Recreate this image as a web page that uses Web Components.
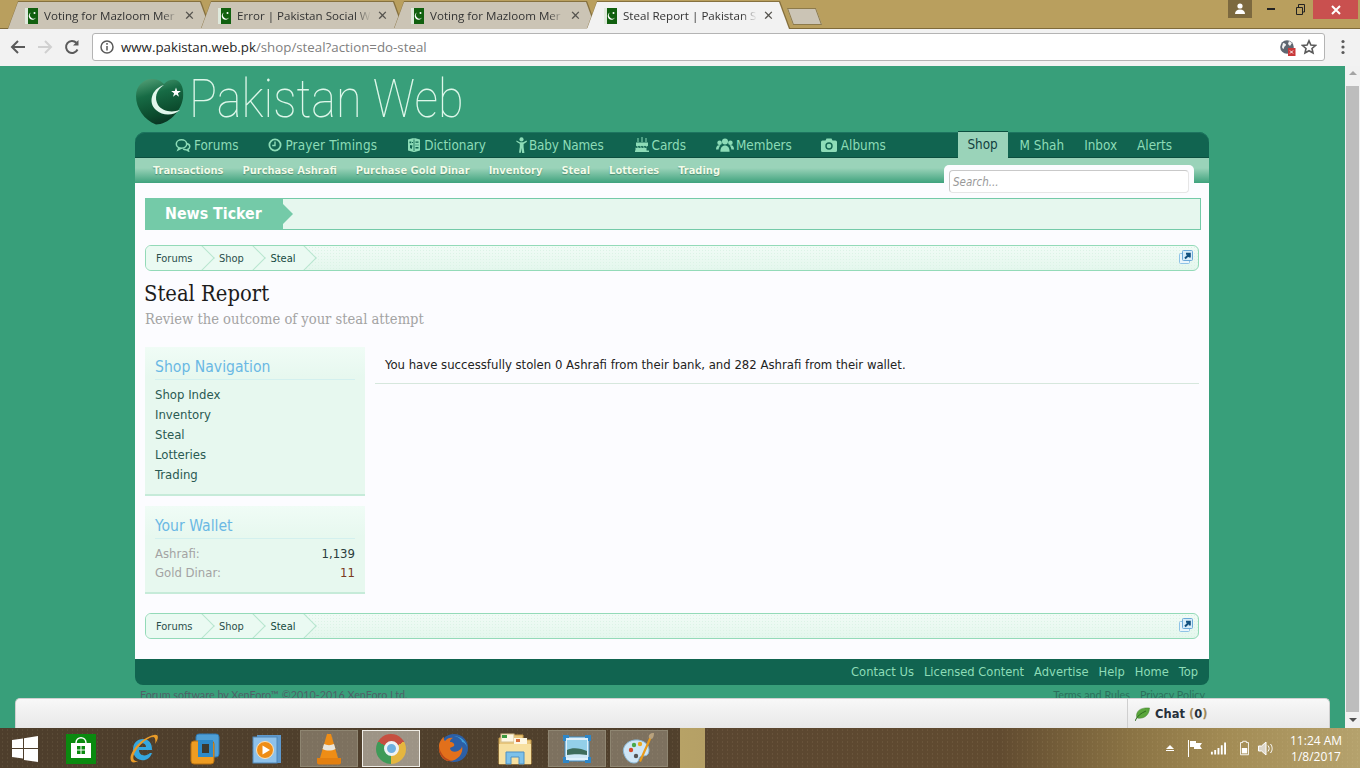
<!DOCTYPE html>
<html lang="en">
<head>
<meta charset="utf-8">
<title>Steal Report | Pakistan Social Web</title>
<style>
html, body { margin: 0; height: 100%; overflow: hidden; }
body { display: flex; flex-direction: column; height: 768px; font-family: "Open Sans", sans-serif; }
</style>
</head>
<body>
<browser-tabs></browser-tabs>
<browser-toolbar></browser-toolbar>
<web-viewport>
    <site-header></site-header>
    <site-nav></site-nav>
    <site-content>
        <news-ticker></news-ticker>
        <bread-crumbs></bread-crumbs>
        <page-title title="Steal Report" subtitle="Review the outcome of your steal attempt"></page-title>
        <shop-layout>
            <side-block slot="side" heading="Shop Navigation" kind="nav">
                <a>Shop Index</a><a>Inventory</a><a>Steal</a><a>Lotteries</a><a>Trading</a>
            </side-block>
            <side-block slot="side" heading="Your Wallet" kind="wallet">
                <wallet-row label="Ashrafi:" value="1,139"></wallet-row>
                <wallet-row label="Gold Dinar:" value="11" tone="#7a3a1e"></wallet-row>
            </side-block>
            You have successfully stolen 0 Ashrafi from their bank, and 282 Ashrafi from their wallet.
        </shop-layout>
        <bread-crumbs class="lower"></bread-crumbs>
    </site-content>
    <site-footer></site-footer>
</web-viewport>
<win-taskbar></win-taskbar>

<script>
const ICONS = {
    forums: '<svg viewBox="0 0 16 14" width="16" height="14" fill="none" stroke="currentColor" stroke-width="1.5"><ellipse cx="6.5" cy="6" rx="5.2" ry="4.2"/><path d="M4 9.5 3 12l3.5-1.8"/><path d="M11.5 5.5c2 .5 3.500 2 3.200 3.500-.2 1.300-1 2-1.700 2.300l.5 1.700-2.500-1.300c-1 0-2-.2-2.800-.8" /></svg>',
    clock: '<svg viewBox="0 0 14 14" width="14" height="14" fill="none" stroke="currentColor" stroke-width="1.8"><circle cx="7" cy="7" r="5.6"/><path d="M7 3.500V7.500H4.200" stroke-width="1.400"/></svg>',
    book: '<svg viewBox="0 0 14 16" width="14" height="16"><path fill="currentColor" d="M1 2.500 6.500 1 7 2l.5-1L13 2.500v11l-5.500 1.500h-1L1 13.500z"/><path fill="#116450" d="M2.500 4.500h1.800v1.800H2.500zM5 5h1v1H5zM6.600 2.500h.8v11.500h-.8zM3 8l2.500.6-.8 3.400L3 11zM8.500 4.500h3v1.200h-3zM8.500 7.500h1v1h-1zM10.500 7.500h1v1h-1zM8.500 10h3v1.400h-3z"/></svg>',
    baby: '<svg viewBox="0 0 11 16" width="11" height="16" fill="currentColor"><circle cx="5.500" cy="2.400" r="2.100"/><path d="M.5 3.500 3.800 5.200h3.400l3.300-1.700.5 1.200-3.400 2.300v3l.8 6H6.100L5.500 11l-.6 4.800H3l.8-6v-3L.4 4.700z"/></svg>',
    cake: '<svg viewBox="0 0 16 16" width="16" height="16" fill="currentColor"><path d="M3.500 1h1v4h-1zM7.500 0h1v5h-1zM11.500 1h1v4h-1zM2 5.500h12v3.200l-1.500 1-1.500-1-1.500 1-1.500-1-1.500 1-1.500-1-1.500 1L2 8.700zM1.500 10.500l1 .6 1.500-.9 1.500.9 1.500-.9 1.500.9 1.500-.9 1.500.9 1-.6v3H15v1.500H1v-1.500h.5z"/></svg>',
    members: '<svg viewBox="0 0 18 14" width="18" height="14" fill="currentColor"><circle cx="9" cy="3.600" r="3"/><circle cx="3.600" cy="4.800" r="2.300"/><circle cx="14.400" cy="4.800" r="2.300"/><path d="M4.400 13.800c0-4 1.800-6.200 4.600-6.200s4.600 2.200 4.600 6.200zM0 11.500c0-2.500 1-4.200 3-4.200.6 0 1 .1 1.400.3-1 1-1.600 2.200-1.800 3.900zM18 11.500c0-2.500-1-4.200-3-4.200-.6 0-1 .1-1.400.3 1 1 1.600 2.200 1.800 3.900z"/></svg>',
    camera: '<svg viewBox="0 0 16 14" width="16" height="14"><path fill="currentColor" d="M1.500 2.500h3L5.500.5h5l1 2h3A1.500 1.500 0 0 1 16 4v8.500a1.500 1.500 0 0 1-1.500 1.500h-13A1.500 1.500 0 0 1 0 12.500V4a1.500 1.500 0 0 1 1.500-1.500z"/><circle cx="8" cy="8" r="3.700" fill="#116450"/><circle cx="8" cy="8" r="2.300" fill="currentColor"/></svg>'
};

function define(name, html) {
    const template = document.createElement('template');
    template.innerHTML = html;
    customElements.define(name, class extends HTMLElement {
        constructor() {
            super();
            this._shadowRoot = this.attachShadow({ mode: 'open' });
            this._shadowRoot.appendChild(template.content.cloneNode(true));
        }
    });
}

/* ---------- browser chrome ---------- */

const flagSvg = '<svg viewBox="0 0 13 16" width="13" height="16"><rect width="13" height="16" fill="#11600f"/><rect width="3" height="16" fill="#dfe9dc"/><path d="M6 4.500a3.800 3.800 0 1 0 5 5 3.200 3.200 0 0 1-5-5z" fill="#fff"/><circle cx="9.500" cy="5" r="1" fill="#fff"/></svg>';

class BrowserTab extends HTMLElement {
    constructor() {
        super();
        this._shadowRoot = this.attachShadow({ mode: 'open' });
    }
    connectedCallback() {
        const on = this.hasAttribute('active');
        this._shadowRoot.innerHTML = `
        <style>
        :host { display: block; width: 202px; height: 27px; margin: 2px -9px 0 0; position: relative; z-index: ${on ? 2 : 1}; filter: drop-shadow(0 -1px 0 #86713f) drop-shadow(1px 0 0 #86713f); }
        .shape { height: 100%; display: flex; align-items: center; box-sizing: border-box; padding-left: 17px;
            background: ${on ? '#f2f2f2' : '#cbc4b5'}; clip-path: polygon(0 100%, 10px 0, calc(100% - 10px) 0, 100% 100%); }
        svg { flex: none; }
        .label { width: 134px; margin-left: 6px; white-space: nowrap; overflow: hidden; font: 11.6px "Open Sans", sans-serif; color: #333;
            -webkit-mask-image: linear-gradient(90deg, #000 88%, transparent); mask-image: linear-gradient(90deg, #000 88%, transparent); }
        .close { margin-left: 6px; font: bold 13px "DejaVu Sans", sans-serif; color: #55534e; }
        </style>
        <div class="shape">${flagSvg}<span class="label">${this.getAttribute('label')}</span><span class="close">✕</span></div>`;
    }
}
customElements.define('browser-tab', BrowserTab);

define('browser-tabs', `
    <style>
    :host { display: flex; flex: none; height: 29px; box-sizing: border-box; padding-left: 8px; background: linear-gradient(#b99f5e 28px, #7f6a39 28px); align-items: flex-start; }
    .new { width: 27px; height: 15px; margin: 8px 0 0 10px; background: #cbc4b5; border: 1px solid #8d7a4a; transform: skewX(20deg); }
    .win { margin-left: auto; display: flex; align-items: flex-start; padding-right: 2px; }
    .user { width: 24px; height: 18px; background: #7c693f; display: flex; align-items: center; justify-content: center; margin-right: 5px; }
    .ctl { width: 29px; height: 19px; display: flex; align-items: center; justify-content: center; }
    .closebtn { width: 45px; height: 19px; background: #c9504f; display: flex; align-items: center; justify-content: center; margin-left: -2px; }
    </style>
    <browser-tab label="Voting for Mazloom Mer"></browser-tab>
    <browser-tab label="Error | Pakistan Social We"></browser-tab>
    <browser-tab label="Voting for Mazloom Mer"></browser-tab>
    <browser-tab active label="Steal Report | Pakistan So"></browser-tab>
    <div class="new"></div>
    <div class="win">
        <div class="user"><svg width="12" height="12" viewBox="0 0 12 12" fill="#fff"><circle cx="6" cy="3" r="2.600"/><path d="M1 11c0-3 2-4.500 5-4.500s5 1.500 5 4.500z"/></svg></div>
        <div class="ctl"><svg width="9" height="3"><rect width="8" height="2" fill="#222"/></svg></div>
        <div class="ctl"><svg width="9" height="11" fill="none" stroke="#222"><path d="M.5 3.500h6v7h-6zM2.500 3V.5h6V8H7"/></svg></div>
        <div class="closebtn"><svg width="10" height="10" stroke="#fff" stroke-width="2"><path d="M1 1l8 8M9 1 1 9"/></svg></div>
    </div>
`);

define('browser-toolbar', `
    <style>
    :host { display: flex; flex: none; height: 37px; box-sizing: border-box; padding: 4px 0 5px 10px; align-items: center; background: #f2f2f2; }
    .nav { width: 16px; height: 16px; margin-right: 11px; flex: none; }
    .bar { flex: none; width: 1233px; height: 28px; margin-left: 1px; box-sizing: border-box; border: 1px solid #b4b4b4; border-radius: 3px; background: #fff; display: flex; align-items: center; padding: 0 7px 0 7px; }
    .url { margin-left: 7px; font: 13.3px "Open Sans", sans-serif; color: #808080; white-space: nowrap; }
    .url b { font-weight: 400; color: #262626; }
    .right { margin-left: auto; display: flex; align-items: center; gap: 5px; }
    .menu { margin-left: 16px; }
    </style>
    <svg class="nav" viewBox="0 0 16 16" fill="none" stroke="#5a5a5a" stroke-width="2"><path d="M15 8H2M8 2 2 8l6 6"/></svg>
    <svg class="nav" viewBox="0 0 16 16" fill="none" stroke="#d0d0d0" stroke-width="2"><path d="M1 8h13M8 2l6 6-6 6"/></svg>
    <svg class="nav" viewBox="0 0 16 16" fill="none" stroke="#5a5a5a" stroke-width="2"><path d="M13.500 10.500A6 6 0 1 1 12.400 3.800"/><path d="M14.500 1v5.500H9z" fill="#5a5a5a" stroke="none"/></svg>
    <div class="bar">
        <svg width="14" height="14" viewBox="0 0 14 14" fill="none" stroke="#5a5a5a" stroke-width="1.500"><circle cx="7" cy="7" r="6"/><path d="M7 6v4.500M7 3v1.800"/></svg>
        <span class="url"><b>www.pakistan.web.pk</b>/shop/steal?action=do-steal</span>
        <div class="right">
            <svg width="16" height="17" viewBox="0 0 16 17"><circle cx="7" cy="8" r="6.800" fill="#5e6670"/><path d="M3 4c2 0 3 1 3 2s-2 1-2 3-2 0-2-1zM9 2l3 2-2 3-2-2zM10 10l3 1-2 3z" fill="#f2f2f2"/><rect x="8" y="9" width="7.500" height="8" fill="#c9393a"/><path d="M10 11.500l3 3M13 11.500l-3 3" stroke="#fff"/></svg>
            <svg width="16" height="16" viewBox="0 0 16 16" fill="none" stroke="#5a5a5a" stroke-width="1.600"><path d="M8 1.800l1.900 4.200 4.500.5-3.400 3 1 4.500L8 11.700 4 14l1-4.500-3.400-3 4.500-.5z"/></svg>
        </div>
    </div>
    <svg class="menu" style="margin-left:16px" width="4" height="16" viewBox="0 0 4 16" fill="#5a5a5a"><circle cx="2" cy="2.500" r="1.600"/><circle cx="2" cy="8" r="1.600"/><circle cx="2" cy="13.500" r="1.600"/></svg>
`);

/* ---------- site ---------- */

define('web-viewport', `
    <style>
    :host { display: flex; flex: 1; min-height: 0; position: relative; overflow: hidden; background: #389f7a; }
    .page { flex: 1; min-width: 0; padding-left: 135px; overflow: hidden; }
    .sheet { width: 1074px; }
    .scroll { flex: none; width: 15px; box-sizing: border-box; background: #f1f1f1; display: flex; flex-direction: column; align-items: center; padding: 5px 1px 0; }
    .thumb { width: 100%; height: 626px; margin: 11px 0 6px; background: #bdbdbd; }
    .up, .down { width: 0; height: 0; border-left: 4px solid transparent; border-right: 4px solid transparent; }
    .up { border-bottom: 4px solid #a4a4a4; }
    .down { border-top: 4px solid #505050; }
    .legal { display: flex; justify-content: space-between; padding: 3px 4px 0 5px; font: 10.8px Lato, sans-serif; color: #2b6f5c; }
    .legal .soft { color: #4f6068; }
    .legal span + span { margin-left: 10px; }
    </style>
    <div class="page"><div class="sheet">
        <slot></slot>
        <div class="legal"><div class="soft">Forum software by XenForo™ ©2010-2016 XenForo Ltd.</div><div><span>Terms and Rules</span><span>Privacy Policy</span></div></div>
    </div></div>
    <div class="scroll"><div class="up"></div><div class="thumb"></div><div class="down"></div></div>
    <chat-bar></chat-bar>
`);

define('site-header', `
    <style>
    :host { display: flex; align-items: center; height: 66px; }
    svg { flex: none; margin: 5px 0 0 1px; }
    .name { margin-left: 5px; font: 100 53px/60px Roboto, "Open Sans", sans-serif; color: #def7ea; white-space: nowrap; transform: scaleX(.882); transform-origin: left center; }
    </style>
    <svg width="48" height="47" viewBox="0 0 48 47">
        <defs><linearGradient id="h" x1=".2" y1="0" x2=".5" y2="1"><stop offset="0" stop-color="#4f9d74"/><stop offset=".35" stop-color="#176b45"/><stop offset=".8" stop-color="#0b4a2c"/><stop offset="1" stop-color="#0a3322"/></linearGradient></defs>
        <path d="M20 46.500C8 42 0 30 0 18 0 6 10 0 17 1c5 0 9 3 11 5 3-4 8-5 12-4 6 2 8 10 7 18-2 14-15 26.500-27 26.500z" fill="url(#h)"/>
        <path d="M28 7C15 11 12 25 20 32c7 6 17 6 24 0-9 3-18 1-22-5-4-7-2-15 6-20z" fill="#e2f7ec"/>
        <path d="M40 9.500l1.200 3.500h3.700l-3 2.200 1.100 3.500-3-2.200-3 2.200 1.100-3.500-3-2.200h3.700z" fill="#fff"/>
    </svg>
    <div class="name">Pakistan Web</div>
`);

class NavLink extends HTMLElement {
    constructor() {
        super();
        this._shadowRoot = this.attachShadow({ mode: 'open' });
    }
    connectedCallback() {
        const icon = ICONS[this.getAttribute('icon')] || '';
        this._shadowRoot.innerHTML = `
        <style>
        :host { display: flex; align-items: center; gap: 3px; height: 26px; font: 13.4px "DejaVu Sans Condensed", "DejaVu Sans", sans-serif; color: #8ddcb7; white-space: nowrap; }
        svg { display: block; flex: none; }
        </style>${icon}<slot></slot>`;
    }
}
customElements.define('nav-link', NavLink);

define('site-nav', `
    <style>
    :host { display: block; position: relative; }
    .top { height: 26px; display: flex; background: #116450; border-radius: 10px 10px 0 0; box-sizing: border-box; padding-left: 40px; box-shadow: inset 0 -1px 0 #0c4f3f, inset 0 1px 0 #1d7560; }
    .main { display: flex; gap: 30px; }
    .right { margin-left: auto; display: flex; padding-right: 37px; }
    .right nav-link { margin-right: 20px; }
    .right nav-link:last-child { margin-right: 0; }
    .shop { width: 50px; height: 27px; margin: -1px 11px 0 0; background: #9ad3b9; color: #123f3f; display: flex; align-items: center; justify-content: center; font: 13.4px "DejaVu Sans Condensed", sans-serif; box-shadow: inset 0 1px 0 #0c4f3f; }
    .sub { height: 25px; display: flex; gap: 19px; padding-left: 18px; background: linear-gradient(#9ad3b9 0, #9ad3b9 40%, #3fa27d 100%); align-items: center; padding-bottom: 1px; box-sizing: border-box; font: bold 11px "DejaVu Sans Condensed", sans-serif; color: #f2fbe9; text-shadow: 0 1px 1px #4d8d72; }
    .searchtab { position: absolute; left: 809px; top: 33px; width: 250px; height: 28px; box-sizing: border-box; padding: 5px; background: #fcfcff; border-radius: 5px 5px 0 0; }
    .input { height: 23px; box-sizing: border-box; border: 1px solid #c9c9c9; border-bottom-color: #e6e6e6; border-right-color: #e6e6e6; border-radius: 4px; background: #fff; padding: 0 3px; font: italic 11.500px/22px "DejaVu Sans Condensed", sans-serif; color: #999; }
    </style>
    <div class="top">
        <div class="main">
            <nav-link icon="forums">Forums</nav-link>
            <nav-link icon="clock" style="letter-spacing:.15px">Prayer Timings</nav-link>
            <nav-link icon="book">Dictionary</nav-link>
            <nav-link icon="baby" style="gap:2px;letter-spacing:-.15px">Baby Names</nav-link>
            <nav-link icon="cake" style="gap:2px">Cards</nav-link>
            <nav-link icon="members" style="gap:2px">Members</nav-link>
            <nav-link icon="camera" style="margin-left:-1px;gap:4px">Albums</nav-link>
        </div>
        <div class="right">
            <div class="shop">Shop</div>
            <nav-link style="margin-left:1px">M Shah</nav-link>
            <nav-link>Inbox</nav-link>
            <nav-link>Alerts</nav-link>
        </div>
    </div>
    <div class="sub"><span>Transactions</span><span>Purchase Ashrafi</span><span>Purchase Gold Dinar</span><span>Inventory</span><span>Steal</span><span>Lotteries</span><span>Trading</span></div>
    <div class="searchtab"><div class="input">Search...</div></div>
`);

define('site-content', `
    <style>
    :host { display: block; height: 476px; box-sizing: border-box; padding: 15px 10px 0 10px; background: #fcfcff; }
    </style>
    <slot></slot>
`);

define('news-ticker', `
    <style>
    :host { display: flex; height: 32px; width: 1056px; box-sizing: border-box; border: 1px solid #74caa8; background: #e6f7ee; }
    .label { position: relative; width: 137px; margin: -1px 0; box-sizing: border-box; padding-left: 19px; background: #74caa8; color: #fff; font: bold 15.8px/32px "DejaVu Sans Condensed", sans-serif; }
    .label::after { content: ""; position: absolute; left: 100%; top: 6px; border-left: 10px solid #74caa8; border-top: 10px solid transparent; border-bottom: 10px solid transparent; }
    </style>
    <div class="label">News Ticker</div>
`);

define('bread-crumbs', `
    <style>
    :host { display: flex; align-items: center; height: 26px; margin-top: 15px; box-sizing: border-box; border: 1px solid #93dab8; border-radius: 6px; overflow: hidden; position: relative; padding-left: 10px;
        background: radial-gradient(circle, #dcf3e6 .6px, transparent .8px) 0 0/3px 3px, linear-gradient(#f1fbf6, #e4f7ed);
        font: 11px "DejaVu Sans Condensed", sans-serif; color: #2b4f4c; }
    .fill { position: absolute; left: 0; top: 0; bottom: 0; width: 160px; background: #eafaf2; }
    span { position: relative; z-index: 0; padding-right: 9px; margin-right: 17.5px; height: 100%; display: flex; align-items: center; }
    span::after { content: ""; position: absolute; z-index: -1; right: -9px; top: 3px; width: 17px; height: 17px; transform: rotate(45deg); border: solid #b7e6cf; border-width: 1px 1px 0 0; background: #eafaf2; }
    b { font-weight: 400; color: #164a3f; }
    svg { position: absolute; right: 5px; top: 4px; }
    </style>
    <div class="fill"></div>
    <span>Forums</span><span>Shop</span><span><b>Steal</b></span>
    <svg width="14" height="14" viewBox="0 0 14 14"><rect x=".5" y="3.500" width="10" height="10" rx="1" fill="#e9f5fb" stroke="#8fc3e6"/><rect x="3.500" y=".5" width="10" height="10" rx="1" fill="#d7ecf9" stroke="#6ca9d8"/><path d="M6 8.500 10 4.500M7 3.800h3.800v3.800" fill="none" stroke="#12507e" stroke-width="2"/></svg>
`);

class PageTitle extends HTMLElement {
    constructor() {
        super();
        this._shadowRoot = this.attachShadow({ mode: 'open' });
    }
    connectedCallback() {
        this._shadowRoot.innerHTML = `
        <style>
        :host { display: block; margin-top: 8px; height: 68px; }
        h1 { margin: 0 0 0 -1px; font: 400 21.8px/30px "DejaVu Serif Condensed", "DejaVu Serif", serif; color: #1c1c1c; }
        p { margin: 0; font: 14.6px/20px "DejaVu Serif Condensed", "DejaVu Serif", serif; color: #a3a3a3; }
        </style>
        <h1>${this.getAttribute('title')}</h1><p>${this.getAttribute('subtitle')}</p>`;
    }
}
customElements.define('page-title', PageTitle);

define('shop-layout', `
    <style>
    :host { display: flex; height: 251px; font: 13px "DejaVu Sans Condensed", sans-serif; color: #222; }
    .side { flex: none; width: 220px; display: flex; flex-direction: column; gap: 10px; }
    .main { flex: 1; margin-left: 10px; height: 37px; box-sizing: border-box; padding: 9px 10px 0; border-bottom: 1px solid #d6e7dd; line-height: 18px; white-space: nowrap; }
    </style>
    <div class="side"><slot name="side"></slot></div>
    <div class="main"><slot></slot></div>
`);

class SideBlock extends HTMLElement {
    constructor() {
        super();
        this._shadowRoot = this.attachShadow({ mode: 'open' });
    }
    connectedCallback() {
        const nav = this.getAttribute('kind') === 'nav';
        this._shadowRoot.innerHTML = `
        <style>
        :host { display: block; box-sizing: border-box; height: ${nav ? 149 : 88}px; padding: 10px 10px 0; border-bottom: 2px solid #c6ebd9; background: linear-gradient(#f0fcf6, #e7f8ef 30px); font: 13px "DejaVu Sans Condensed", sans-serif; }
        h3 { margin: 0; height: 22px; font: 400 15.6px/20px "DejaVu Sans Condensed", sans-serif; color: #6ab8e4; border-bottom: 1px solid #d3f0ee; }
        .list { display: flex; flex-direction: column; padding-top: 5px; }
        ::slotted(a) { display: block; line-height: 20px; color: #2a5a52; }
        </style>
        <h3>${this.getAttribute('heading')}</h3>
        <div class="list"><slot></slot></div>`;
    }
}
customElements.define('side-block', SideBlock);

class WalletRow extends HTMLElement {
    constructor() {
        super();
        this._shadowRoot = this.attachShadow({ mode: 'open' });
    }
    connectedCallback() {
        this._shadowRoot.innerHTML = `
        <style>
        :host { display: flex; justify-content: space-between; line-height: 19px; color: #a3a3a3; }
        b { font-weight: 400; color: ${this.getAttribute('tone') || '#2b3d3d'}; }
        </style>
        <span>${this.getAttribute('label')}</span><b>${this.getAttribute('value')}</b>`;
    }
}
customElements.define('wallet-row', WalletRow);

define('site-footer', `
    <style>
    :host { display: flex; justify-content: flex-end; gap: 10px; height: 26px; box-sizing: border-box; padding: 0 11px 0 0; background: #116450; border-radius: 0 0 8px 8px; font: 12.8px/25px "DejaVu Sans Condensed", sans-serif; color: #8ddcb7; }
    </style>
    <span>Contact Us</span><span>Licensed Content</span><span>Advertise</span><span>Help</span><span>Home</span><span>Top</span>
`);

define('chat-bar', `
    <style>
    :host { position: absolute; left: 15px; bottom: 0; width: 1315px; height: 30px; box-sizing: border-box; border: solid #d0d0d0; border-width: 1px 1px 0; border-radius: 5px 5px 0 0; background: linear-gradient(#f8f8f8, #e8e8e8); display: flex; justify-content: flex-end; }
    .chat { width: 202px; border-left: 1px solid #cfcfcf; display: flex; align-items: center; padding-left: 7px; box-sizing: border-box; gap: 5px; font: bold 11.500px "DejaVu Sans", sans-serif; color: #262f3a; }
    i { font-style: normal; color: #a08a5e; }
    </style>
    <div class="chat">
        <svg width="15" height="14" viewBox="0 0 15 14"><path d="M14.500 1C8 .5 2 2 1.500 8.500c0 1 .3 2 .8 2.500C7 12 14 10 14.500 1z" fill="#5aa63c" stroke="#3e7d2a" stroke-width=".5"/><path d="M0 14c2-5 6-8 11-10" fill="none" stroke="#2f6a20"/></svg>
        <span>Chat <i>(</i>0<i>)</i></span>
    </div>
`);

/* ---------- windows taskbar ---------- */

define('win-taskbar', `
    <style>
    :host { display: flex; flex: none; height: 40px; align-items: center; gap: 4px; position: relative;
        background:
            linear-gradient(90deg, transparent 680px, #b7a266 680px, #b5a066 705px, transparent 705px),
            radial-gradient(circle, rgba(255,235,190,.07) .7px, transparent 1px) 0 0/5px 4px,
            linear-gradient(90deg, #4e3e2c 0, #50402c 670px, #5a4630 720px, #614b30 1000px, #8a7344 1130px, #a38c55 1230px, #b5a26d 1360px); }
    .slot { flex: none; width: 58px; height: 37px; margin-top: 1px; display: flex; align-items: center; justify-content: center; box-sizing: border-box; }
    .start { width: 50px; margin-right: -2px; }
    .open { border: 1px solid #8f8672; background: rgba(200,195,180,.38); }
    .hot { border: 1.500px solid #efece5; background: rgba(210,205,195,.6); }
    .chrome { width: 30px; height: 30px; border-radius: 50%; background: conic-gradient(#c64f40 0 60deg, #e5b63f 60deg 180deg, #3f9a58 180deg 300deg, #c64f40 300deg); display: flex; align-items: center; justify-content: center; }
    .chrome::after { content: ""; width: 9px; height: 9px; border: 3px solid #eef2f4; border-radius: 50%; background: #6fb0df; }
    .tray { position: absolute; left: 1165px; top: 0; height: 40px; display: flex; align-items: center; color: #fff; }
    .clock { position: absolute; left: 125px; top: 5px; width: 52px; text-align: center; font: 12px/16px "Open Sans", sans-serif; color: #fff; white-space: nowrap; }
    </style>
    <div class="slot start"><svg width="26" height="26" viewBox="0 0 26 26" fill="#fff"><path d="M0 4l11-1.500V12H0zM12 2.300 26 0v12H12zM0 13h11v9.500L0 21zM12 13h14v13l-14-2z"/></svg></div>
    <div class="slot"><svg width="30" height="30" viewBox="0 0 30 30"><rect width="30" height="30" fill="#0a8a0f"/><path d="M5 9h20v15H5z" fill="#fff"/><path d="M10 9c0-7 10-7 10 0" fill="none" stroke="#fff" stroke-width="1.500"/><path d="M11 12h3.500v3.500H11zM15.500 12H19v3.500h-3.500zM11 16.500h3.500V20H11zM15.500 16.500H19V20h-3.500z" fill="#0a8a0f"/></svg></div>
    <div class="slot"><svg width="32" height="32" viewBox="0 0 32 32"><path d="M6 17c0-7 4-11 10-11s9 4 9 11H12c0 6 7 7 11 3h2c-2 6-7 8-11 7-5-1-8-5-8-10zm6-3h7c0-5-7-5-7 0z" fill="#35a7df"/><path d="M5 29C-1 24 12 5 27 2c5-1 5 3 1 9 1-4 0-7-2-7C17 5 3 22 7 27c1 1 2 1 4 1-2 1-4 2-6 1z" fill="#e99b28"/></svg></div>
    <div class="slot"><svg width="30" height="32" viewBox="0 0 30 32"><rect x="6" y="1" width="23" height="23" rx="3" fill="#4f9fd6" stroke="#2e79b3"/><rect x="1" y="8" width="23" height="23" rx="3" fill="#ee9c22" stroke="#b56f10"/><rect x="8" y="7" width="15" height="17" fill="#2d8ac8"/><rect x="12" y="11" width="7" height="9" fill="#3d3a2f"/></svg></div>
    <div class="slot"><svg width="30" height="32" viewBox="0 0 30 32"><rect x="5" y="2" width="24" height="28" fill="#5f99cd"/><rect x="1" y="4" width="24" height="26" fill="#8ec1ea" stroke="#4f86b8"/><circle cx="13" cy="17" r="8.500" fill="#ee8d16" stroke="#fbe3bd"/><path d="M10.500 12.500 18 17l-7.500 4.500z" fill="#fff"/></svg></div>
    <div class="slot open"><svg width="26" height="32" viewBox="0 0 26 32"><path d="M11 1h4l7 24H4z" fill="#ee8d16"/><path d="M8 11c3 1.500 7 1.500 10 0l1.500 5c-4 2-9 2-13 0zM5 22l1-3" fill="#e9e6dd"/><path d="M1 25h24v4.500a2 2 0 0 1-2 2H3a2 2 0 0 1-2-2z" fill="#e27f10"/></svg></div>
    <div class="slot hot"><div class="chrome"></div></div>
    <div class="slot"><svg width="32" height="32" viewBox="0 0 32 32"><circle cx="17" cy="15" r="14" fill="#2c5fa6"/><path d="M17 3c6 0 13 5 13 12 0-3-3-6-5-6 0-2-3-5-8-6z" fill="#3fa1dc"/><path d="M2 13c0-4 3-8 5-9-.5 2 0 3 1 4 2-3 6-4 8-3-2 1-3 2-3 4 3 0 5 2 4 4-1 1-3 1-4 2 0 3 4 5 8 3 2-1 4-3 4-5 2 7-4 15-13 15C6 28 1 21 2 13z" fill="#e2701b"/><path d="M2 13C3 21 9 27 16 28c-7 2-15-5-14-15z" fill="#b9481b"/></svg></div>
    <div class="slot"><svg width="36" height="34" viewBox="0 0 36 34"><path d="M2 6h6l2-3h16v5h8v24H2z" fill="#e8c67a" stroke="#c59a48"/><rect x="4" y="2" width="13" height="8" fill="#fdf7e3" stroke="#d5bf8c"/><rect x="5" y="3" width="5" height="3" fill="#3c9a3f"/><rect x="17" y="6" width="13" height="6" fill="#fdf7e3"/><rect x="19" y="7" width="4" height="3" fill="#d9703c"/><rect x="2" y="12" width="32" height="20" fill="#f7e0a0"/><path d="M9 32V20h18v12h-5v-7h-8v7z" fill="#7cc1ea" stroke="#4d90c4"/></svg></div>
    <div class="slot open"><svg width="30" height="30" viewBox="0 0 30 30"><rect x="3" y="3" width="24" height="24" fill="#dff1fb" stroke="#3f8fc8"/><rect x="5" y="6" width="20" height="18" fill="#93cfe9"/><path d="M5 16c5-3 14-2 20 1v7H5z" fill="#3e6d5c"/><path d="M5 21c6-1 14-1 20 0v3H5z" fill="#cde7f5"/><path d="M1 1h6v3H4v3H1zM29 1v6h-3V4h-3V1zM1 29v-6h3v3h3v3zM29 29h-6v-3h3v-3h3z" fill="#2f86c6"/></svg></div>
    <div class="slot open"><svg width="34" height="34" viewBox="0 0 34 34"><path d="M2 22C-1 14 7 7 16 8c9 1 13 8 10 14-2 3-6 1-8 3-2 3-1 6-6 6-4 0-8-3-10-9z" fill="#cfe6f6" stroke="#8bbad9"/><circle cx="9" cy="18" r="2.200" fill="#d5492a"/><circle cx="12" cy="13" r="2.200" fill="#4aa84a"/><circle cx="18" cy="12" r="2.200" fill="#e9a924"/><circle cx="14" cy="24" r="2.200" fill="#555"/><path d="M30 5 19 30l-2-1L28 4z" fill="#e89a1b"/><path d="M27 6c-1-3 1-5 5-5 0 3-1 6-3 6z" fill="#b8a27e"/></svg></div>
    <div class="tray">
        <svg width="10" height="6" viewBox="0 0 10 6" fill="#fff"><path d="M5 0l4 4H1zM1 5h8v1H1z"/></svg>
        <svg style="margin-left:12px" width="15" height="17" viewBox="0 0 15 17" fill="#fff"><path d="M1 0h1v17H1zM3 1h6v2h6l-2 3 2 3H7V7H3z"/></svg>
        <svg style="margin-left:8px" width="16" height="13" viewBox="0 0 17 13" fill="#fff"><path d="M1 10h2v3H1zM4.500 8h2v5h-2zM8 6h2v7H8zM11.500 3h2v10h-2zM15 0h2v13h-2z"/></svg>
        <svg style="margin-left:14px" width="9" height="16" viewBox="0 0 10 16"><path d="M3 .5h4v1.500h2.500v13.500H.5V2H3z" fill="none" stroke="#fff"/><rect x="2" y="8" width="6" height="6" fill="#fff"/></svg>
        <svg style="margin-left:9px" width="16" height="15" viewBox="0 0 16 15" fill="none" stroke="#fff"><path d="M.5 5h3L8 1v13L3.500 10h-3z" fill="#dcd6c8"/><path d="M10 4.500c1.500 2 1.500 4 0 6M12.500 3c2.200 3 2.200 6 0 9"/></svg>
        <div class="clock">11:24 AM<br>1/8/2017</div>
    </div>
`);
</script>
</body>
</html>
